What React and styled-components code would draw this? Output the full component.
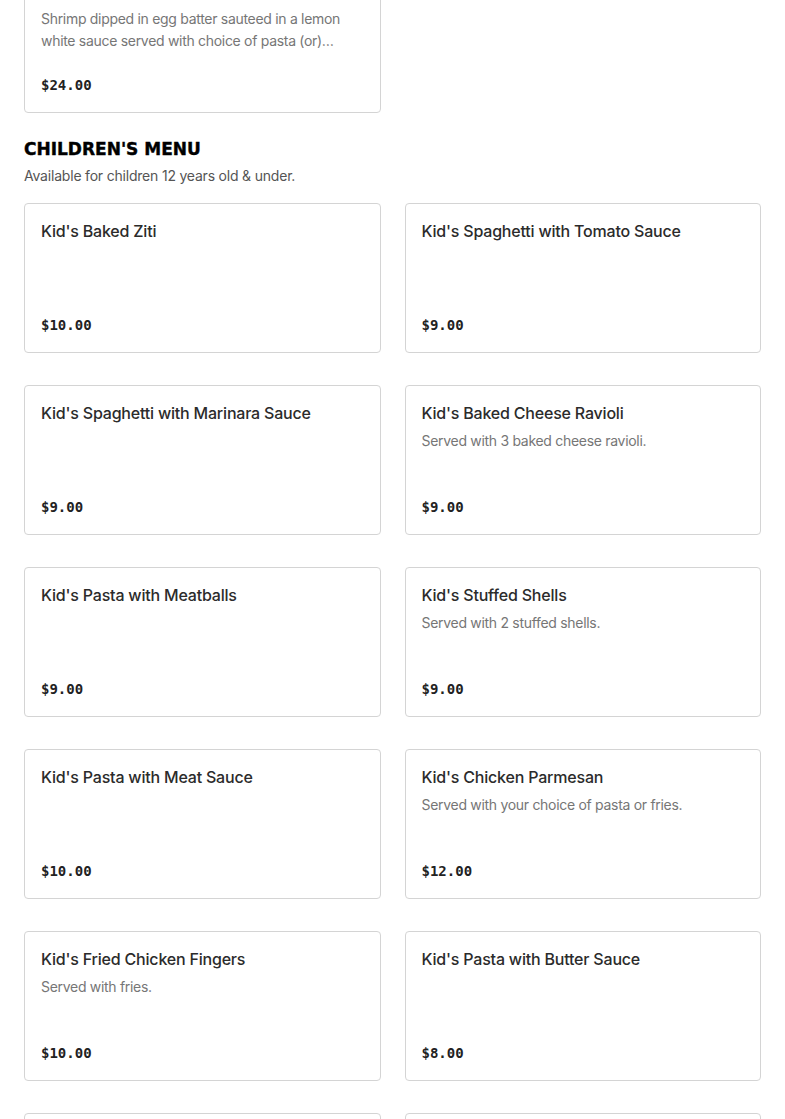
import React from 'react'
import styled, { createGlobalStyle } from 'styled-components'

const GlobalStyle = createGlobalStyle`
  body {
    margin: 0;
    background: #ffffff;
    font-family: Inter, "Noto Sans", sans-serif;
    -webkit-font-smoothing: antialiased;
  }
`

const previousItem = {
  name: 'Shrimp Francese',
  description:
    'Shrimp dipped in egg batter sauteed in a lemon white sauce served with choice of pasta (or) vegetables.',
  price: '$24.00',
}

const childrenItems = [
  { name: "Kid's Baked Ziti", price: '$10.00' },
  { name: "Kid's Spaghetti with Tomato Sauce", price: '$9.00' },
  { name: "Kid's Spaghetti with Marinara Sauce", price: '$9.00' },
  {
    name: "Kid's Baked Cheese Ravioli",
    description: 'Served with 3 baked cheese ravioli.',
    price: '$9.00',
  },
  { name: "Kid's Pasta with Meatballs", price: '$9.00' },
  {
    name: "Kid's Stuffed Shells",
    description: 'Served with 2 stuffed shells.',
    price: '$9.00',
  },
  { name: "Kid's Pasta with Meat Sauce", price: '$10.00' },
  {
    name: "Kid's Chicken Parmesan",
    description: 'Served with your choice of pasta or fries.',
    price: '$12.00',
  },
  {
    name: "Kid's Fried Chicken Fingers",
    description: 'Served with fries.',
    price: '$10.00',
  },
  { name: "Kid's Pasta with Butter Sauce", price: '$8.00' },
  { name: "Kid's Chicken Cutlet", price: '$10.00' },
  { name: "Kid's Grilled Cheese", price: '$8.00' },
]

const MenuCard = ({ item }) => (
  <Card>
    <ItemName>{item.name}</ItemName>
    {item.description && <ItemDescription>{item.description}</ItemDescription>}
    <Price>{item.price}</Price>
  </Card>
)

const App = () => (
  <>
    <GlobalStyle />
    <Page>
      <Grid>
        <MenuCard item={previousItem} />
      </Grid>
      <Section>
        <SectionTitle>CHILDREN'S MENU</SectionTitle>
        <SectionNote>Available for children 12 years old &amp; under.</SectionNote>
        <Grid>
          {childrenItems.map(item => (
            <MenuCard key={item.name} item={item} />
          ))}
        </Grid>
      </Section>
    </Page>
  </>
)

const Page = styled.main`
  margin-top: -37px;
  padding: 0 24px 40px;
`

const Section = styled.section`
  margin-top: 25px;
`

const SectionTitle = styled.h2`
  margin: 0;
  font-family: "DejaVu Sans", sans-serif;
  font-weight: 700;
  font-size: 17px;
  line-height: 22px;
  color: #000000;
  -webkit-text-stroke: 0.4px #000000;
`

const SectionNote = styled.p`
  margin: 6px 0 0;
  font-size: 14px;
  line-height: 20px;
  letter-spacing: -0.2px;
  color: #555555;
`

const Grid = styled.div`
  display: grid;
  grid-template-columns: 1fr 1fr;
  column-gap: 24px;
  row-gap: 32px;

  ${SectionNote} + & {
    margin-top: 17px;
  }
`

const Card = styled.article`
  box-sizing: border-box;
  display: flex;
  flex-direction: column;
  height: 150px;
  padding: 15px 16px 17px;
  background: #ffffff;
  border: 1px solid #d4d4d4;
  border-radius: 4px;
`

const ItemName = styled.h3`
  margin: 0;
  font-size: 16px;
  font-weight: 500;
  line-height: 24px;
  letter-spacing: -0.2px;
  color: #2b2b2b;
`

const ItemDescription = styled.p`
  display: -webkit-box;
  overflow: hidden;
  -webkit-line-clamp: 2;
  -webkit-box-orient: vertical;
  margin: 5px 0 0;
  font-size: 14px;
  line-height: 22px;
  letter-spacing: -0.3px;
  color: #767676;
`

const Price = styled.span`
  margin-top: auto;
  font-family: "DejaVu Sans Mono", "Liberation Mono", monospace;
  font-weight: 700;
  font-size: 14px;
  line-height: 20px;
  color: #222222;
`

export default App
